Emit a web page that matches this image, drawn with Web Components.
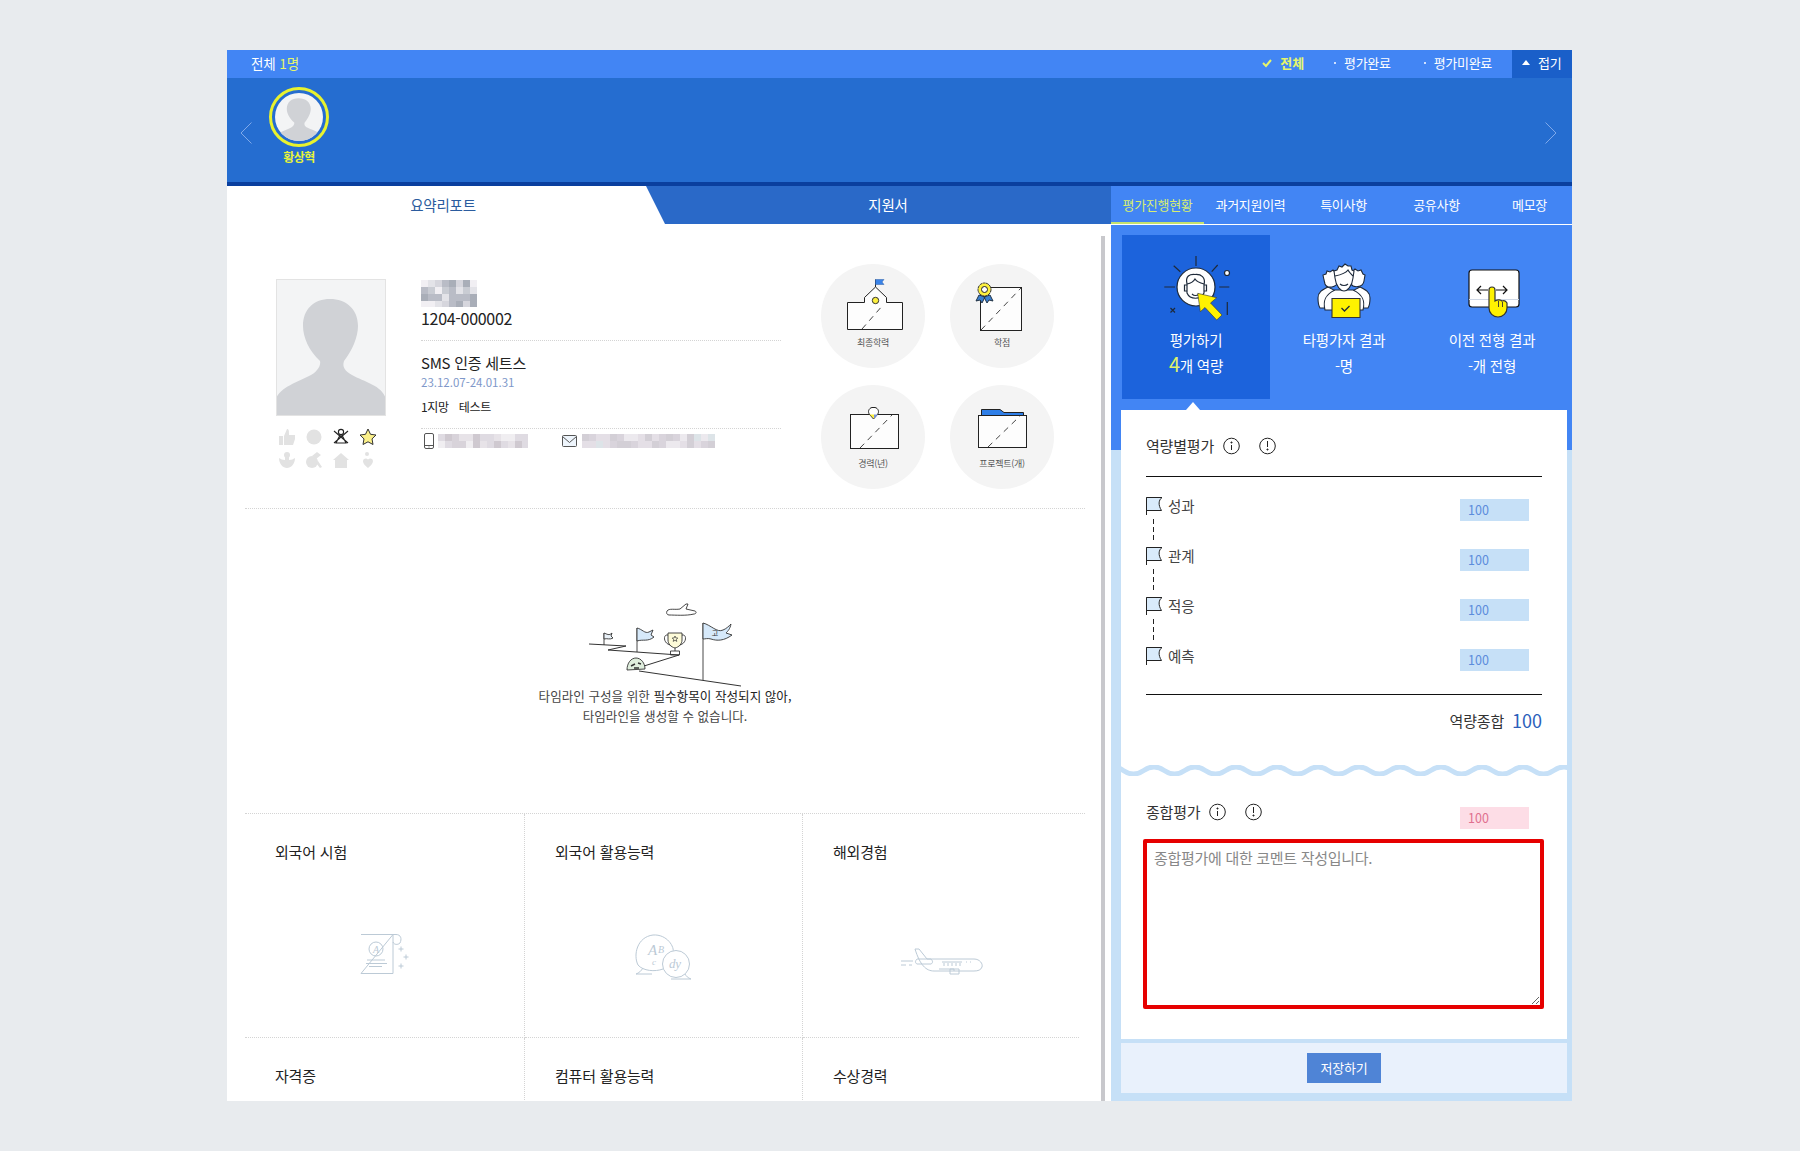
<!DOCTYPE html>
<html lang="ko">
<head>
<meta charset="utf-8">
<title>평가</title>
<style>
  html, body { margin: 0; }
  body {
    background: #e8ebee;
    padding: 50px 228px 50px 227px;
    font-family: "Noto Sans CJK KR", "Noto Sans", sans-serif;
    color: #333;
  }
</style>
</head>
<body>
<app-shell>
  <top-bar slot="head"></top-bar>
  <candidate-strip slot="head"></candidate-strip>
  <report-panel slot="report">
    <profile-card></profile-card>
    <timeline-empty></timeline-empty>
    <spec-grid></spec-grid>
  </report-panel>
  <eval-panel slot="eval"></eval-panel>
</app-shell>

<script>
class AppShell extends HTMLElement {
  constructor() {
    super();
    this.attachShadow({ mode: 'open' });
  }
  connectedCallback() {
    this.shadowRoot.innerHTML = `
      <style>
        :host { display: block; width: 1345px; height: 1051px; overflow: hidden; }
        .work { display: flex; height: 915px; }
        ::slotted(report-panel) { width: 884px; flex: none; }
        ::slotted(eval-panel) { width: 461px; flex: none; }
      </style>
      <slot name="head"></slot>
      <div class="work">
        <slot name="report"></slot>
        <slot name="eval"></slot>
      </div>
    `;
  }
}

class TopBar extends HTMLElement {
  constructor() {
    super();
    this.attachShadow({ mode: 'open' });
  }
  connectedCallback() {
    this.shadowRoot.innerHTML = `
      <style>
        :host { display: flex; align-items: center; height: 28px; background: #4285f4; color: #fff; font-size: 13px; letter-spacing: -.3px; line-height: 24px; }
        .total { margin: -3px 0 0 24px; font-size: 13.500px; letter-spacing: -.1px; }
        .total b, .on { color: #e6f56b; font-weight: 400; }
        .filters { margin-left: auto; display: flex; align-items: center; height: 28px; }
        .f { display: flex; align-items: center; gap: 8px; margin: -3px 31px 0 0; }
        .f:nth-child(3) { margin-right: 20px; }
        .f i { width: 2px; height: 2px; background: #cfe0ff; margin-left: 2px; }
        .on { font-weight: 700; letter-spacing: -.1px; margin-right: 28px; }
        .fold { width: 60px; height: 28px; background: #1a5fc9; display: flex; align-items: center; gap: 8px; padding: 0 0 3px 10px; box-sizing: border-box; }
        .fold span { width: 0; height: 0; border: 4px solid transparent; border-top: 0; border-bottom: 5px solid #fff; }
      </style>
      <div class="total">전체 <b>1명</b></div>
      <div class="filters">
        <div class="f on">
          <svg width="10" height="10" viewBox="0 0 10 10"><path d="M1 5l3 3 5-6" fill="none" stroke="#e6f56b" stroke-width="2"/></svg>
          전체
        </div>
        <div class="f"><i></i>평가완료</div>
        <div class="f"><i></i>평가미완료</div>
        <div class="fold"><span></span>접기</div>
      </div>
    `;
  }
}

const SILHOUETTE = 'M0 137V120C4 108 22 103 35 96C42 92 45 86 44 82C33 72 27 58 27 47C27 30 38 20 54 20C70 20 82 30 82 47C82 58 76 72 68 82C66 88 69 92 76 96C88 103 106 106 110 120V137Z';

class CandidateStrip extends HTMLElement {
  constructor() {
    super();
    this.attachShadow({ mode: 'open' });
  }
  connectedCallback() {
    this.shadowRoot.innerHTML = `
      <style>
        :host { display: flex; height: 104px; background: #256dd0; border-bottom: 4px solid #0a3f9e; padding: 0 15px 0 13px; }
        .arrow { margin-top: 44px; flex: none; }
        .person { margin: 9px 0 0 17px; width: 60px; text-align: center; color: #e8f33a; font-size: 12px; font-weight: 700; letter-spacing: -.5px; line-height: 16px; }
        .ring { width: 60px; height: 60px; box-sizing: border-box; border: 3px solid #e8f22e; border-radius: 50%; padding: 3px; margin-bottom: 2px; }
        .ring svg { display: block; width: 48px; height: 48px; border-radius: 50%; background: #f3f4f5; }
        .next { margin-left: auto; }
      </style>
      <svg class="arrow" width="12" height="22" viewBox="0 0 12 22"><path d="M11.5 .5L1 11l10.5 10.5" fill="none" stroke="#7fa9ea"/></svg>
      <div class="person">
        <div class="ring"><svg viewBox="0 0 110 110"><path transform="translate(0 -6) scale(1 .9)" d="${SILHOUETTE}" fill="#d0d2d6"/></svg></div>
        황상혁
      </div>
      <svg class="arrow next" width="12" height="22" viewBox="0 0 12 22"><path d="M.5 .5L11 11 .5 21.5" fill="none" stroke="#7fa9ea"/></svg>
    `;
  }
}

class ReportPanel extends HTMLElement {
  constructor() {
    super();
    this.attachShadow({ mode: 'open' });
  }
  connectedCallback() {
    this.shadowRoot.innerHTML = `
      <style>
        :host { display: block; position: relative; background: #fff; overflow: hidden; height: 915px; }
        .tabs { display: flex; height: 38px; background: #2a69c8; font-size: 14.500px; letter-spacing: -.2px; line-height: 37px; text-align: center; }
        .tabs div:first-child { width: 438px; background: #fff; color: #2b5c9e; padding-right: 6px; box-sizing: border-box; clip-path: polygon(0 0, 419px 0, 100% 100%, 0 100%); }
        .tabs div:last-child { flex: 1; color: #fff; }
        .body { margin-left: 18px; }
        .scroll { position: absolute; right: 6px; top: 50px; bottom: 0; width: 4px; background: #c8c8cc; }
      </style>
      <div class="tabs"><div>요약리포트</div><div>지원서</div></div>
      <div class="body"><slot></slot></div>
      <div class="scroll"></div>
    `;
  }
}

class BlurBlock extends HTMLElement {
  constructor() {
    super();
    this.attachShadow({ mode: 'open' });
  }
  connectedCallback() {
    const w = +this.getAttribute('w'), h = +this.getAttribute('h'), cell = +this.getAttribute('cell') || 7;
    const colors = this.getAttribute('colors').split(',');
    let seed = +this.getAttribute('seed') || 3;
    const cols = Math.ceil(w / cell), rows = Math.ceil(h / cell);
    let cells = '';
    for (let i = 0; i < cols * rows; i++) {
      seed = (seed * 37 + 11) % 101;
      cells += `<i style="background:${colors[seed % colors.length]}"></i>`;
    }
    this.shadowRoot.innerHTML = `
      <style>
        :host { display: block; width: ${w}px; height: ${h}px; overflow: hidden; flex: none; }
        div { display: grid; grid-template-columns: repeat(${cols}, ${cell}px); grid-auto-rows: ${cell}px; }
      </style>
      <div>${cells}</div>
    `;
  }
}

class StatCircle extends HTMLElement {
  constructor() {
    super();
    this.attachShadow({ mode: 'open' });
  }
  connectedCallback() {
    this.shadowRoot.innerHTML = `
      <style>
        :host { display: flex; flex-direction: column; align-items: center; width: 104px; height: 104px; border-radius: 50%; background: #f4f4f4; font-size: 9px; letter-spacing: -.3px; color: #555; line-height: 14px; }
        ::slotted(svg) { display: block; }
      </style>
      <slot name="icon"></slot>
      <slot></slot>
    `;
  }
}

class ProfileCard extends HTMLElement {
  constructor() {
    super();
    this.attachShadow({ mode: 'open' });
  }
  connectedCallback() {
    const dash = (d) => `<path d="${d}" fill="none" stroke="#444" stroke-dasharray="6 5"/>`;
    const line = '#222';
    this.shadowRoot.innerHTML = `
      <style>
        :host { display: flex; align-items: flex-start; width: 840px; height: 285px; box-sizing: border-box; padding: 40px 0 0 31px; border-bottom: 1px dotted #d4d4d4; }
        .side { width: 110px; margin: 15px 35px 0 0; flex: none; }
        .photo { display: block; width: 110px; height: 137px; background: #f3f4f5; outline: 1px solid #e3e3e3; outline-offset: -1px; }
        .marks { display: grid; grid-template-columns: repeat(4, 27px); grid-auto-rows: 18px; row-gap: 5px; margin: 12px 0 0 -3px; justify-items: center; }
        .info { width: 360px; margin: 16px 40px 0 0; flex: none; color: #222; }
        .id { font-size: 16px; line-height: 22px; letter-spacing: -.3px; padding-bottom: 11px; border-bottom: 1px dotted #d4d4d4; }
        .project { font-size: 15px; line-height: 22px; margin-top: 11px; letter-spacing: -.25px; }
        .date { font-size: 11.5px; line-height: 16px; color: #7e97c9; }
        .apply { font-size: 12px; line-height: 16px; margin-top: 9px; padding-bottom: 13px; border-bottom: 1px dotted #d4d4d4; letter-spacing: -.3px; }
        .apply span { margin-left: 10px; }
        .contact { display: flex; align-items: center; margin-top: 4px; }
        .contact svg { flex: none; }
        .circles { display: grid; grid-template-columns: 104px 104px; gap: 17px 25px; flex: none; }
      </style>
      <div class="side">
        <svg class="photo" viewBox="0 0 110 137"><path d="${SILHOUETTE}" fill="#d0d2d6"/></svg>
        <div class="marks">
          <svg width="18" height="18" viewBox="0 0 18 18"><path d="M1 8h4v9H1zM6 8l3-7c2 0 2 2 2 6h6v4l-2 6H6z" fill="#e2e2e2"/></svg>
          <svg width="18" height="18" viewBox="0 0 18 18"><circle cx="9" cy="9" r="7.5" fill="#e2e2e2"/></svg>
          <svg width="18" height="18" viewBox="0 0 18 18" fill="none" stroke="#222" stroke-width="1.1"><circle cx="9" cy="4" r="2.6"/><path d="M4 15l4-8h2l4 8zM2 3l14 12M16 3L2 15"/></svg>
          <svg width="18" height="18" viewBox="0 0 18 18"><path d="M9 1l2.5 5.3 5.5.7-4 3.9 1 5.6L9 13.8 4 16.5l1-5.6-4-3.9 5.5-.7z" fill="#fbf08a" stroke="#333"/></svg>
          <svg width="18" height="18" viewBox="0 0 18 18"><circle cx="9" cy="4" r="3" fill="#e2e2e2"/><path d="M7 6h4v3c3 0 4-1 6-2 0 6-4 10-8 10S1 13 1 7c2 1 3 2 6 2z" fill="#e2e2e2"/></svg>
          <svg width="18" height="18" viewBox="0 0 18 18"><circle cx="7" cy="11" r="6" fill="#e2e2e2"/><path d="M7 5l5-4 4 3-5 4zM13 10l4 6-2 1-4-5z" fill="#e2e2e2"/></svg>
          <svg width="18" height="18" viewBox="0 0 18 18"><path d="M9 2l8 7h-2v8H3V9H1z" fill="#e2e2e2"/></svg>
          <svg width="18" height="18" viewBox="0 0 18 18"><path d="M9 17C4 13 3 10 5 8c1.500-1 3-.5 4 .5 1-1 2.500-1.500 4-.5 2 2 1 5-4 9z" fill="#e2e2e2"/><circle cx="8" cy="3" r="2" fill="#e2e2e2"/></svg>
        </div>
      </div>
      <div class="info">
        <blur-block w="56" h="27" cell="7" seed="5" colors="#c9ccd3,#a9aeb8,#e3e3e8,#b9bcc6,#d6d6dd,#f1eff3"></blur-block>
        <div class="id">1204-000002</div>
        <div class="project">SMS 인증 세트스</div>
        <div class="date">23.12.07-24.01.31</div>
        <div class="apply">1지망<span>테스트</span></div>
        <div class="contact">
          <svg width="17" height="16" viewBox="0 0 17 16" fill="none" stroke="#555"><rect x="3.500" y=".5" width="9" height="15" rx="1.500"/><path d="M3.500 12.500h9M7.500 14h1"/></svg>
          <blur-block w="90" h="14" cell="7" seed="8" colors="#e7e3e8,#d8d3da,#f0eef1,#cfc9d0,#dfdbe2"></blur-block>
          <svg style="margin-left:32px" width="19" height="14" viewBox="0 0 19 14" fill="#eef5fc" stroke="#555"><rect x="2.500" y="1.500" width="14" height="11" rx="1"/><path d="M2.500 2.500l7 6 7-6" fill="none"/></svg>
          <blur-block style="margin-left:3px" w="133" h="14" cell="7" seed="14" colors="#e4dfe6,#d9d4dc,#dde4e8,#ece9ee,#d3cfd6"></blur-block>
        </div>
      </div>
      <div class="circles">
        <stat-circle>최종학력
          <svg slot="icon" width="104" height="72" viewBox="0 0 104 72" fill="#fff" stroke="${line}">
            <path d="M26.500 38.500H43.500V33.500L54.500 23 65.500 33.500V38.500H81.500V65.500H26.500Z" fill="#fdfdfd"/>
            <path d="M54.500 23V15.500" fill="none"/>
            <path d="M54.500 15.500H63L61 18 63 20.500H54.500Z" fill="#3a83e8" stroke="#2a5ea8" stroke-width=".5"/>
            <circle cx="54.500" cy="36.500" r="3.200" fill="#fdf03e" stroke="#333"/>
            ${dash('M41 65L62 41')}
          </svg>
        </stat-circle>
        <stat-circle>학점
          <svg slot="icon" width="104" height="72" viewBox="0 0 104 72" fill="#fff" stroke="${line}">
            <rect x="30.500" y="23.500" width="41" height="43" fill="#fdfdfd"/>
            ${dash('M31 66L71 24')}
            <path d="M29 31l-3 6 4-1 2 3 3-6zM40 31l3 6-4-1-2 3-3-6z" fill="#3a7fd0" stroke="#234"/>
            <circle cx="34.500" cy="25.500" r="6.500" fill="#fdf03e" stroke="#333" stroke-dasharray="3 .5"/>
            <circle cx="34.500" cy="25.500" r="3" fill="#fff"/>
          </svg>
        </stat-circle>
        <stat-circle>경력(년)
          <svg slot="icon" width="104" height="72" viewBox="0 0 104 72" fill="#fff" stroke="${line}">
            <rect x="29.500" y="29.500" width="48" height="34" fill="#fdfdfd"/>
            <path d="M49 30c-3-3-1-7 2-7.500h3c3 .5 5 4.500 2 7.500l-3.500 4z" fill="#fff"/>
            <path d="M48.500 29.500h4.500v4z" fill="#fdf03e" stroke="none"/>
            <path d="M53 29.500h4l-4 4z" fill="#7c94d8" stroke="none"/>
            ${dash('M39 63L71 30')}
          </svg>
        </stat-circle>
        <stat-circle>프로젝트(개)
          <svg slot="icon" width="104" height="72" viewBox="0 0 104 72" stroke="${line}">
            <path d="M31.500 31V24.500H50L54 27.500H73.500V31Z" fill="#2f7fe8"/>
            <rect x="28.500" y="30.500" width="48" height="32" fill="#fdfdfd"/>
            ${dash('M38 62L70 31')}
          </svg>
        </stat-circle>
      </div>
    `;
  }
}

class TimelineEmpty extends HTMLElement {
  constructor() {
    super();
    this.attachShadow({ mode: 'open' });
  }
  connectedCallback() {
    this.shadowRoot.innerHTML = `
      <style>
        :host { display: block; width: 840px; height: 305px; box-sizing: border-box; padding-top: 94px; border-bottom: 1px dotted #d4d4d4; text-align: center; font-size: 12.600px; line-height: 20px; color: #444; }
        svg { display: block; margin: 0 auto; }
        p { margin: -2px 0 0; }
        b { font-weight: 400; color: #222; }
      </style>
      <svg width="152" height="85" viewBox="0 0 152 85" fill="none" stroke="#333" stroke-width=".9">
        <path d="M50 68L152 83M0 41L37 43 19 47 90 52 55 63" stroke-width="1"/>
        <path d="M15 42V30M48 49V25M114 77V20"/>
        <path d="M15 30C18 31 20 33 23 30L22 33 24 35C21 37 18 35 15 36Z" fill="#e9f1f8"/>
        <path d="M48 25C53 26 56 31 60 29L64 27 62 32 65 34C59 39 54 36 48 38Z" fill="#d6e9fa"/>
        <path d="M114 20C122 22 128 30 134 27 137 26 140 23 142 21 141 26 139 28 137 30L143 32C135 38 128 38 122 36 119 35 116 36 114 36Z" fill="#d6e9fa"/>
        <text x="126" y="33" font-size="7" fill="#333" stroke="none" text-anchor="middle">고</text>
        <path d="M79 30H93V37C93 41 90 44 86 45 82 44 79 41 79 37Z" fill="#fdfbd8"/>
        <path d="M79 32C74 31 74 40 81 42M93 32C98 31 98 40 91 42M86 45V48M81.500 48H90.500V52H81.500Z" fill="none"/>
        <path d="M86 33l.8 1.900 2 .2-1.500 1.300.5 2-1.800-1.100-1.800 1.100.5-2-1.500-1.300 2-.2z" stroke-width=".7"/>
        <path d="M38 67C38 60 42 55 47 55 52 55 56 60 56 66Z" fill="#dfeedd"/>
        <path d="M42 63l4-2M49 60l3 1M45 65h5" stroke-width="1.400"/>
        <path d="M78 8C80 5 86 7 91 6L97 1 99 1 97 6 106 8C108 9 107 11 105 11 97 13 86 12 80 12 78 12 77 10 78 8Z" fill="#fff"/>
      </svg>
      <p><span>타임라인 구성을 위한</span> <b>필수항목이 작성되지 않아,</b><br>타임라인을 생성할 수 없습니다.</p>
    `;
  }
}

class SpecCell extends HTMLElement {
  constructor() {
    super();
    this.attachShadow({ mode: 'open' });
  }
  connectedCallback() {
    this.shadowRoot.innerHTML = `
      <style>
        :host { display: block; box-sizing: border-box; padding: 28px 0 0 30px; border-bottom: 1px dotted #d4d4d4; font-size: 15px; line-height: 20px; letter-spacing: -.2px; color: #222; }
        :host(:not(:nth-child(3n+1))) { border-right: 1px dotted #d4d4d4; }
        .t { height: 20px; }
        ::slotted(svg) { display: block; margin: 63px auto 0; position: relative; left: -15px; }
      </style>
      <div class="t">${this.getAttribute('title')}</div>
      <slot></slot>
    `;
  }
}

class SpecGrid extends HTMLElement {
  constructor() {
    super();
    this.attachShadow({ mode: 'open' });
  }
  connectedCallback() {
    const c = '#bccad6';
    this.shadowRoot.innerHTML = `
      <style>
        :host { display: grid; grid-template-columns: 280px 278px 276px; grid-auto-rows: 224px; width: 834px; }
      </style>
      <spec-cell title="외국어 시험">
        <svg width="90" height="64" viewBox="0 0 90 64" fill="none" stroke="${c}">
          <path d="M21 9.500H56C61 9.500 62 14 60 18 58 20 54 20 53 17M53 9.500V48.500H21Z"/>
          <circle cx="36" cy="24" r="7"/>
          <text x="36" y="28" font-family="Liberation Serif" font-style="italic" font-size="10" fill="${c}" stroke="none" text-anchor="middle">A</text>
          <path d="M27 35H45M26 38.500H47M29 41.500H42M61 21.500v5M58.500 24h5M66 29.500v5M63.500 32h5M61 38.500v5M58.500 41h5"/>
        </svg>
      </spec-cell>
      <spec-cell title="외국어 활용능력">
        <svg width="90" height="64" viewBox="0 0 90 64" fill="none" stroke="${c}">
          <path d="M44 44C36 47 24 46 19 40 14 30 18 12 34 10 48 9 56 22 54 28"/>
          <path d="M24 43C22 46 20 48 17 49H33"/>
          <circle cx="57" cy="39" r="13.500" fill="#fff"/>
          <path d="M66 49C67 51 69 53 72 54H52"/>
          <text x="29" y="30" font-family="Liberation Serif" font-style="italic" font-size="15" fill="${c}" stroke="none">A</text>
          <text x="39" y="28" font-family="Liberation Serif" font-style="italic" font-size="10" fill="${c}" stroke="none">B</text>
          <text x="33" y="40" font-family="Liberation Serif" font-style="italic" font-size="9" fill="${c}" stroke="none">c</text>
          <text x="50" y="43" font-family="Liberation Serif" font-style="italic" font-size="13" fill="${c}" stroke="none">dy</text>
        </svg>
      </spec-cell>
      <spec-cell title="해외경험">
        <svg width="90" height="64" viewBox="0 0 90 64" fill="none" stroke="${c}">
          <path d="M19 24H23L31 34H78C84 34 87 39 86 42 85 45 82 46 78 46H38C30 46 24 40 19 24Z"/>
          <path d="M21 34H35C37 36 37 38 35 39H21C19 38 19 36 21 34ZM43 44H58V46M54 44H63V49H54Z"/>
          <path d="M5 36H17M5 40H10M13 40H16M46 37H66" />
          <path d="M48 38v3M52 38v3M56 38v3M60 38v3M64 38v3M70 37h1M74 37h1" />
        </svg>
      </spec-cell>
      <spec-cell title="자격증"></spec-cell>
      <spec-cell title="컴퓨터 활용능력"></spec-cell>
      <spec-cell title="수상경력"></spec-cell>
    `;
  }
}

class EvalTabs extends HTMLElement {
  constructor() {
    super();
    this.attachShadow({ mode: 'open' });
  }
  connectedCallback() {
    const tabs = ['평가진행현황', '과거지원이력', '특이사항', '공유사항', '메모장'];
    this.shadowRoot.innerHTML = `
      <style>
        :host { display: grid; grid-template-columns: repeat(5, 93px); height: 38px; overflow: hidden; border-bottom: 1px solid #fff; font-size: 13px; letter-spacing: -.3px; color: #fff; text-align: center; }
        div { line-height: 37px; box-sizing: border-box; height: 38px; }
        .on { color: #d8ee70; border-bottom: 2px solid #c5e26e; }
      </style>
      ${tabs.map((t, i) => `<div class="${i === 0 ? 'on' : ''}">${t}</div>`).join('')}
    `;
  }
}

class StatTile extends HTMLElement {
  constructor() {
    super();
    this.attachShadow({ mode: 'open' });
  }
  connectedCallback() {
    this.shadowRoot.innerHTML = `
      <style>
        :host { display: block; height: 164px; box-sizing: border-box; padding-top: 15px; text-align: center; font-size: 14.500px; line-height: 26px; letter-spacing: -.2px; color: #fff; }
        :host([active]) { background: #1c63dc; }
        ::slotted(svg) { display: block; margin: 0 auto -3px; }
      </style>
      <slot name="icon"></slot>
      <slot></slot>
    `;
  }
}

class InfoMarks extends HTMLElement {
  constructor() {
    super();
    this.attachShadow({ mode: 'open' });
  }
  connectedCallback() {
    this.shadowRoot.innerHTML = `
      <style>
        :host { display: flex; gap: 19px; margin-left: 9px; }
        svg { display: block; }
      </style>
      <svg width="17" height="24" viewBox="0 0 17 24" fill="none" stroke="#222"><circle cx="8.500" cy="12" r="7.800"/><path d="M8.500 11v5"/><circle cx="8.500" cy="8.500" r=".6" fill="#222"/></svg>
      <svg width="17" height="24" viewBox="0 0 17 24" fill="none" stroke="#222"><circle cx="8.500" cy="12" r="7.800"/><path d="M8.500 7v6"/><circle cx="8.500" cy="15.500" r=".6" fill="#222"/></svg>
    `;
  }
}

class ScoreBox extends HTMLElement {
  constructor() {
    super();
    this.attachShadow({ mode: 'open' });
  }
  connectedCallback() {
    this.shadowRoot.innerHTML = `
      <style>
        :host { display: block; width: 69px; height: 22px; box-sizing: border-box; padding-left: 8px; background: #c6e0f7; color: #5b8cdc; font-size: 12.500px; line-height: 22px; flex: none; }
        :host([pink]) { background: #fddde6; color: #e0708f; }
      </style>
      <slot></slot>
    `;
  }
}

class CompetencyRow extends HTMLElement {
  constructor() {
    super();
    this.attachShadow({ mode: 'open' });
  }
  connectedCallback() {
    this.shadowRoot.innerHTML = `
      <style>
        :host { display: flex; justify-content: space-between; height: 50px; padding-right: 13px; font-size: 14.500px; line-height: 17px; color: #444; }
        :host(:last-child) { height: 24px; }
        .name { display: flex; gap: 6px; height: 18px; }
        svg { display: block; flex: none; }
        .link { width: 1px; height: 21px; margin: 4px 0 0 7px; background: repeating-linear-gradient(#222 0 5px, transparent 5px 8px); }
        :host(:last-child) .link { display: none; }
        score-box { margin-top: 2px; }
      </style>
      <div>
        <div class="name">
          <svg width="16" height="18" viewBox="0 0 16 18"><path d="M.5 .5H16C12.500 3 12 8 15.500 13.500H.5Z" fill="#d9ebfb" stroke="#222"/><path d="M.5 .5V18" stroke="#222"/></svg>
          <span>${this.getAttribute('name')}</span>
        </div>
        <div class="link"></div>
      </div>
      <score-box>100</score-box>
    `;
  }
}

class WaveLine extends HTMLElement {
  constructor() {
    super();
    this.attachShadow({ mode: 'open' });
  }
  connectedCallback() {
    let d = 'M-18.250 5.500Q-8 -1.500 2.250 5.500';
    for (let x = 22.75; x < 470; x += 20.5) d += `T${x} 5.500`;
    this.shadowRoot.innerHTML = `
      <style>
        :host { display: block; height: 11px; }
        svg { display: block; overflow: hidden; }
      </style>
      <svg width="446" height="11" viewBox="0 0 446 11"><path d="${d}" fill="none" stroke="#c6e0f7" stroke-width="5"/></svg>
    `;
  }
}

class EvalPanel extends HTMLElement {
  constructor() {
    super();
    this.attachShadow({ mode: 'open' });
  }
  connectedCallback() {
    const ink = '#1e2a3a';
    this.shadowRoot.innerHTML = `
      <style>
        :host { display: block; height: 915px; background: linear-gradient(#4285f4 264px, #c6e0f7 264px); }
        .tiles { display: grid; grid-template-columns: repeat(3, 148px); margin: 10px 0 11px 11px; position: relative; }
        .tiles::after { content: ""; position: absolute; left: 64px; bottom: -11px; border: 7px solid transparent; border-top: 0; border-bottom: 8px solid #fff; }
        .num { color: #dff26a; font-size: 20px; line-height: 0; }
        .card { margin: 0 5px 0 10px; background: #fff; height: 629px; box-sizing: border-box; padding: 24px 25px 0; }
        h3 { margin: 0; font-size: 15px; font-weight: 400; line-height: 24px; letter-spacing: -.2px; color: #333; display: flex; }
        .head { margin-bottom: 18px; }
        .list { border-top: 1px solid #111; border-bottom: 1px solid #111; padding: 20px 0 23px; }
        .sum { display: flex; justify-content: flex-end; align-items: center; gap: 8px; height: 50px; font-size: 15px; letter-spacing: -.2px; color: #333; }
        .sum b { font-weight: 400; font-size: 18px; color: #2d5fbb; letter-spacing: 0; }
        wave-line { margin: 20px -25px 24px; }
        .overall { display: flex; justify-content: space-between; padding-right: 13px; height: 29px; }
        .overall score-box { margin-top: 7px; }
        textarea { display: block; box-sizing: border-box; width: 401px; height: 170px; margin: 10px 0 0 -3px; padding: 5px 7px; border: 4px solid #e60000; border-radius: 2px; font: 15px/20px "Noto Sans CJK KR", sans-serif; letter-spacing: -.3px; color: #888; outline: none; background: #fff; }
        .foot { margin: 4px 5px 0 10px; height: 50px; background: #e9f1fc; display: flex; justify-content: center; padding-top: 10px; box-sizing: border-box; }
        .foot div { width: 74px; height: 30px; background: #4f84d6; color: #fff; text-align: center; font-size: 13px; line-height: 30px; letter-spacing: -.2px; }
      </style>
      <eval-tabs></eval-tabs>
      <div class="tiles">
        <stat-tile active>
          <svg slot="icon" width="80" height="80" viewBox="0 0 80 80" fill="none" stroke="${ink}" stroke-width="1.200">
            <path d="M40 6V16M17.700 15.700L24.300 21.700M61.700 15L55.700 21.700M8.300 37H19M63.300 37H73.300M71.300 52V65M14.500 58l4.500 4.500M19 58l-4.500 4.500"/>
            <circle cx="71" cy="23" r="2.500" fill="#fff"/>
            <circle cx="40" cy="37" r="19" fill="#fff"/>
            <path d="M31 34C29 26 34 24 39 24.500 45 24 50 27 48 35V43C45 50 34 50 31 43Z" fill="#fff"/>
            <path d="M31 34C36 33 38 31 39 29 41 32 44 33 48 34M31 35H28.500V41H31M48 35H50.500V41H48M36 44C38 46 41 46 43 44"/>
            <path d="M41.700 43.300L60.700 47.700 54.500 53 66 65 60.700 70 49 57.500 44.300 61.700Z" fill="#fff200" stroke="#333" stroke-width=".6"/>
          </svg>
          평가하기<br><span class="num">4</span>개 역량
        </stat-tile>
        <stat-tile>
          <svg slot="icon" width="80" height="80" viewBox="0 0 80 80" fill="#fff" stroke="${ink}" stroke-width="1.100">
            <path d="M14 48C14 42 18 40 24 37L30 40 32 58H16C14 55 14 51 14 48ZM66 48C66 42 62 40 56 37L50 40 48 58H64C66 55 66 51 66 48Z"/>
            <path d="M20 30L19 25 22 24 23 21 26 22 29 20 32 23 35 24 34 31C33 38 23 39 21 34ZM46 30L45 24 48 22 51 19 54 21 57 20 59 24 61 25 60 31C59 38 49 38 47 34Z"/>
            <path d="M21 60C19 52 20 45 31 40H49C60 45 61 52 59 60Z"/>
            <path d="M31 28L30 21 33 20 35 16 38 17 41 14 44 16 47 16 48 20 50 21 49 28C48 37 43 41 40 41 37 41 32 37 31 28Z"/>
            <path d="M31 26C36 25 42 23 44 20 45 22 47 24 49 26M36 34C38 36 42 36 44 34" fill="none"/>
            <path d="M28 48.500H56V67.500H28Z" fill="#fff200" stroke="#333"/>
            <path d="M37.500 58l3 3 5-5" fill="none" stroke-width="1.300"/>
          </svg>
          타평가자 결과<br>-명
        </stat-tile>
        <stat-tile>
          <svg slot="icon" width="80" height="80" viewBox="0 0 80 80" fill="none" stroke="#111" stroke-width="1.200">
            <rect x="17" y="20" width="50" height="37" rx="3" fill="#fff"/>
            <path d="M17 49.500H67" stroke="#cfd8e6"/>
            <path d="M25 40H36M29 36l-4 4 4 4M44 40H55M51 36l4 4-4 4"/>
            <path d="M37 40C37 36 43 36 43 40V51C46 49 49 50 50 51 52 50 54 51 55 53V58C55 63 51 67 46 67 41 67 37 63 37 58Z" fill="#fff200" stroke="#333"/>
            <path d="M46.500 51v6M50.500 52v5" stroke="#333" stroke-width=".9"/>
          </svg>
          이전 전형 결과<br>-개 전형
        </stat-tile>
      </div>
      <div class="card">
        <h3 class="head">역량별평가<info-marks></info-marks></h3>
        <div class="list">
          <competency-row name="성과"></competency-row>
          <competency-row name="관계"></competency-row>
          <competency-row name="적응"></competency-row>
          <competency-row name="예측"></competency-row>
        </div>
        <div class="sum">역량종합 <b>100</b></div>
        <wave-line></wave-line>
        <div class="overall">
          <h3>종합평가<info-marks></info-marks></h3>
          <score-box pink>100</score-box>
        </div>
        <textarea>종합평가에 대한 코멘트 작성입니다.</textarea>
      </div>
      <div class="foot"><div>저장하기</div></div>
    `;
  }
}

customElements.define('app-shell', AppShell);
customElements.define('top-bar', TopBar);
customElements.define('candidate-strip', CandidateStrip);
customElements.define('report-panel', ReportPanel);
customElements.define('blur-block', BlurBlock);
customElements.define('stat-circle', StatCircle);
customElements.define('profile-card', ProfileCard);
customElements.define('timeline-empty', TimelineEmpty);
customElements.define('spec-cell', SpecCell);
customElements.define('spec-grid', SpecGrid);
customElements.define('eval-tabs', EvalTabs);
customElements.define('stat-tile', StatTile);
customElements.define('info-marks', InfoMarks);
customElements.define('score-box', ScoreBox);
customElements.define('competency-row', CompetencyRow);
customElements.define('wave-line', WaveLine);
customElements.define('eval-panel', EvalPanel);
</script>
</body>
</html>
